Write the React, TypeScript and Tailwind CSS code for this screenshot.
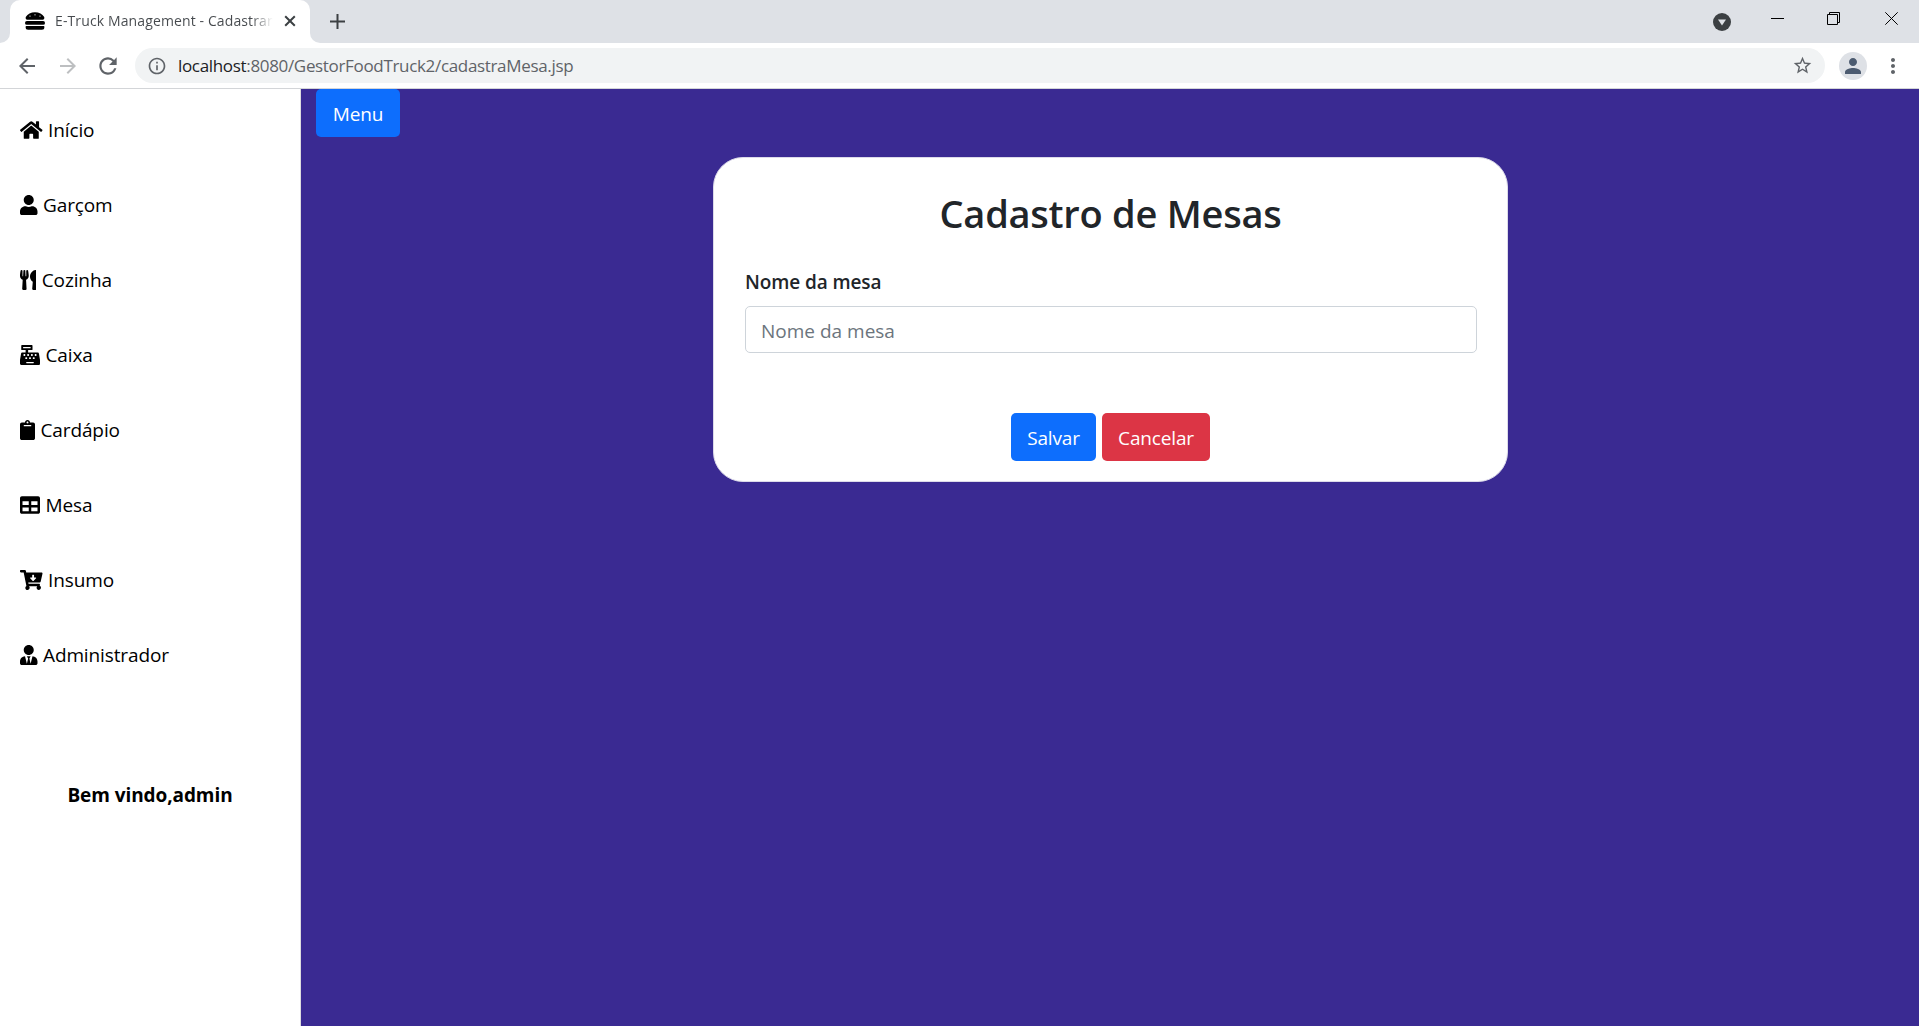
import type { ReactNode } from "react";
import type { IconType } from "react-icons";
import {
  FaHamburger,
  FaHome,
  FaUser,
  FaUtensils,
  FaCashRegister,
  FaClipboard,
  FaTable,
  FaCartArrowDown,
  FaUserTie,
} from "react-icons/fa";
import { MdArrowBack, MdArrowForward, MdInfoOutline, MdMoreVert, MdPerson, MdRefresh, MdStarBorder } from "react-icons/md";

const navItems: { label: string; icon: IconType; width: string }[] = [
  { label: "Início", icon: FaHome, width: "w-[22.5px]" },
  { label: "Garçom", icon: FaUser, width: "w-[17.5px]" },
  { label: "Cozinha", icon: FaUtensils, width: "w-[16.25px]" },
  { label: "Caixa", icon: FaCashRegister, width: "w-[20px]" },
  { label: "Cardápio", icon: FaClipboard, width: "w-[15px]" },
  { label: "Mesa", icon: FaTable, width: "w-[20px]" },
  { label: "Insumo", icon: FaCartArrowDown, width: "w-[22.5px]" },
  { label: "Administrador", icon: FaUserTie, width: "w-[17.5px]" },
];

function TabStrip() {
  return (
    <div className="flex h-[43px] shrink-0 bg-[#dee1e6]">
      <div className="flex w-[10px] bg-white">
        <div className="flex-1 rounded-br-[10px] bg-[#dee1e6]" />
      </div>
      <div className="bg-[#dee1e6]">
        <div className="flex h-[43px] w-[300px] items-center rounded-t-[10px] bg-white pb-px pl-[15px] pr-[14px]">
          <FaHamburger className="size-5 shrink-0 text-black" />
          <span className="ml-[10px] w-[218px] overflow-hidden whitespace-nowrap bg-linear-to-r from-[#45494d] from-90% to-transparent bg-clip-text text-[14px] leading-5 tracking-[0.12px] text-transparent">
            E-Truck Management - Cadastrar
          </span>
          <svg className="ml-auto size-3 shrink-0" viewBox="0 0 12 12" fill="none" stroke="#3c4043" strokeWidth="2">
            <path d="M1.2 1.2 10.8 10.8M10.8 1.2 1.2 10.8" />
          </svg>
        </div>
      </div>
      <div className="flex w-[10px] bg-white">
        <div className="flex-1 rounded-bl-[10px] bg-[#dee1e6]" />
      </div>
      <svg className="ml-[10px] mt-[14px] size-[15px]" viewBox="0 0 15 15" stroke="#3c4043" strokeWidth="2">
        <path d="M7.5 0V15M0 7.5H15" />
      </svg>
      <div className="ml-auto flex pr-[21px] pt-3">
        <svg className="mr-[40px] mt-[1px] size-[18px]" viewBox="0 0 18 18">
          <circle cx="9" cy="9" r="9" fill="#3c4043" />
          <path d="M5 6.5H13L9 12.5Z" fill="#dee1e6" />
        </svg>
        <svg className="mr-[43px] size-[13px]" viewBox="0 0 13 13" stroke="#000">
          <path d="M0 6.5H13" />
        </svg>
        <svg className="mr-[45px] size-[13px]" viewBox="0 0 13 13" fill="none" stroke="#000">
          <path d="M.5 2.5H10.5V12.5H.5ZM2.5 2.5V.5H12.5V10.5H10.5" />
        </svg>
        <svg className="size-[13px]" viewBox="0 0 13 13" stroke="#000">
          <path d="M.3 .3 12.7 12.7M12.7 .3 .3 12.7" />
        </svg>
      </div>
    </div>
  );
}

function Toolbar() {
  return (
    <div className="flex h-[46px] shrink-0 items-center border-b border-[#d3d5d8] bg-white pl-[15px] text-[#5f6368]">
      <MdArrowBack className="size-6" />
      <MdArrowForward className="ml-[17px] size-6 text-[#bdbfc1]" />
      <MdRefresh className="ml-[15px] size-[26px]" />
      <div className="ml-[14px] flex h-[35px] w-[1690px] items-center rounded-full bg-[#f1f3f4] pl-3 pr-[12px]">
        <MdInfoOutline className="size-5" />
        <span className="ml-[11px] text-[17px] tracking-[-0.33px]">
          <span className="text-[#202124]">localhost</span>:8080/GestorFoodTruck2/cadastraMesa.jsp
        </span>
        <MdStarBorder className="ml-auto size-[21px]" />
      </div>
      <div className="ml-[14px] flex size-7 items-center justify-center rounded-full bg-[#dee1e6]">
        <MdPerson className="size-6 text-[#4c5b70]" />
      </div>
      <MdMoreVert className="ml-[13.5px] size-6" />
    </div>
  );
}

function Sidebar() {
  return (
    <aside className="flex w-[301px] shrink-0 flex-col border-r border-[#dcdcdf] bg-white pt-[3px] text-[19px] tracking-[-0.12px] text-black">
      {navItems.map(({ label, icon: Icon, width }) => (
        <a key={label} className="flex h-[75px] items-center gap-[5.5px] pl-5">
          <Icon className={`h-5 ${width}`} />
          <span className="pt-[2px]">{label}</span>
        </a>
      ))}
      <p className="mt-[88px] text-center font-bold leading-[30px] tracking-[-0.08px]">Bem vindo,admin</p>
    </aside>
  );
}

function Button({ className, children }: { className: string; children: ReactNode }) {
  return (
    <button className={`flex h-12 items-center justify-center rounded-[5px] pt-[2px] text-[19px] tracking-[-0.15px] text-white ${className}`}>
      {children}
    </button>
  );
}

export default function App() {
  return (
    <div className="flex h-[1026px] w-full flex-col overflow-hidden font-['Open_Sans',sans-serif]">
      <TabStrip />
      <Toolbar />
      <div className="flex min-h-0 flex-1">
        <Sidebar />
        <main className="flex-1 bg-[#3a2a92] pl-[15px]">
          <Button className="w-[84px] bg-[#0d6efd]">Menu</Button>
          <section className="ml-[397px] mt-5 flex h-[325px] w-[795px] flex-col rounded-[30px] border border-[#dcdae9] bg-white pl-[31px] pr-[30px] pt-[31px] text-[#212529]">
            <h1 className="pr-px text-center text-[38px] font-semibold leading-12 tracking-[-0.25px]">Cadastro de Mesas</h1>
            <label className="mt-[30px] text-[19px] font-semibold leading-[30px] tracking-[-0.1px]">Nome da mesa</label>
            <input
              className="mt-[9px] h-[47px] w-full shrink-0 rounded-[5px] border border-[#ced4da] px-[15px] pt-[2px] text-[19px] outline-none placeholder:text-[#6c757d]"
              placeholder="Nome da mesa"
            />
            <div className="mt-[60px] flex justify-center gap-[6px] pr-px">
              <Button className="w-[85px] bg-[#0d6efd]">Salvar</Button>
              <Button className="w-[108px] bg-[#dc3545]">Cancelar</Button>
            </div>
          </section>
        </main>
      </div>
    </div>
  );
}
